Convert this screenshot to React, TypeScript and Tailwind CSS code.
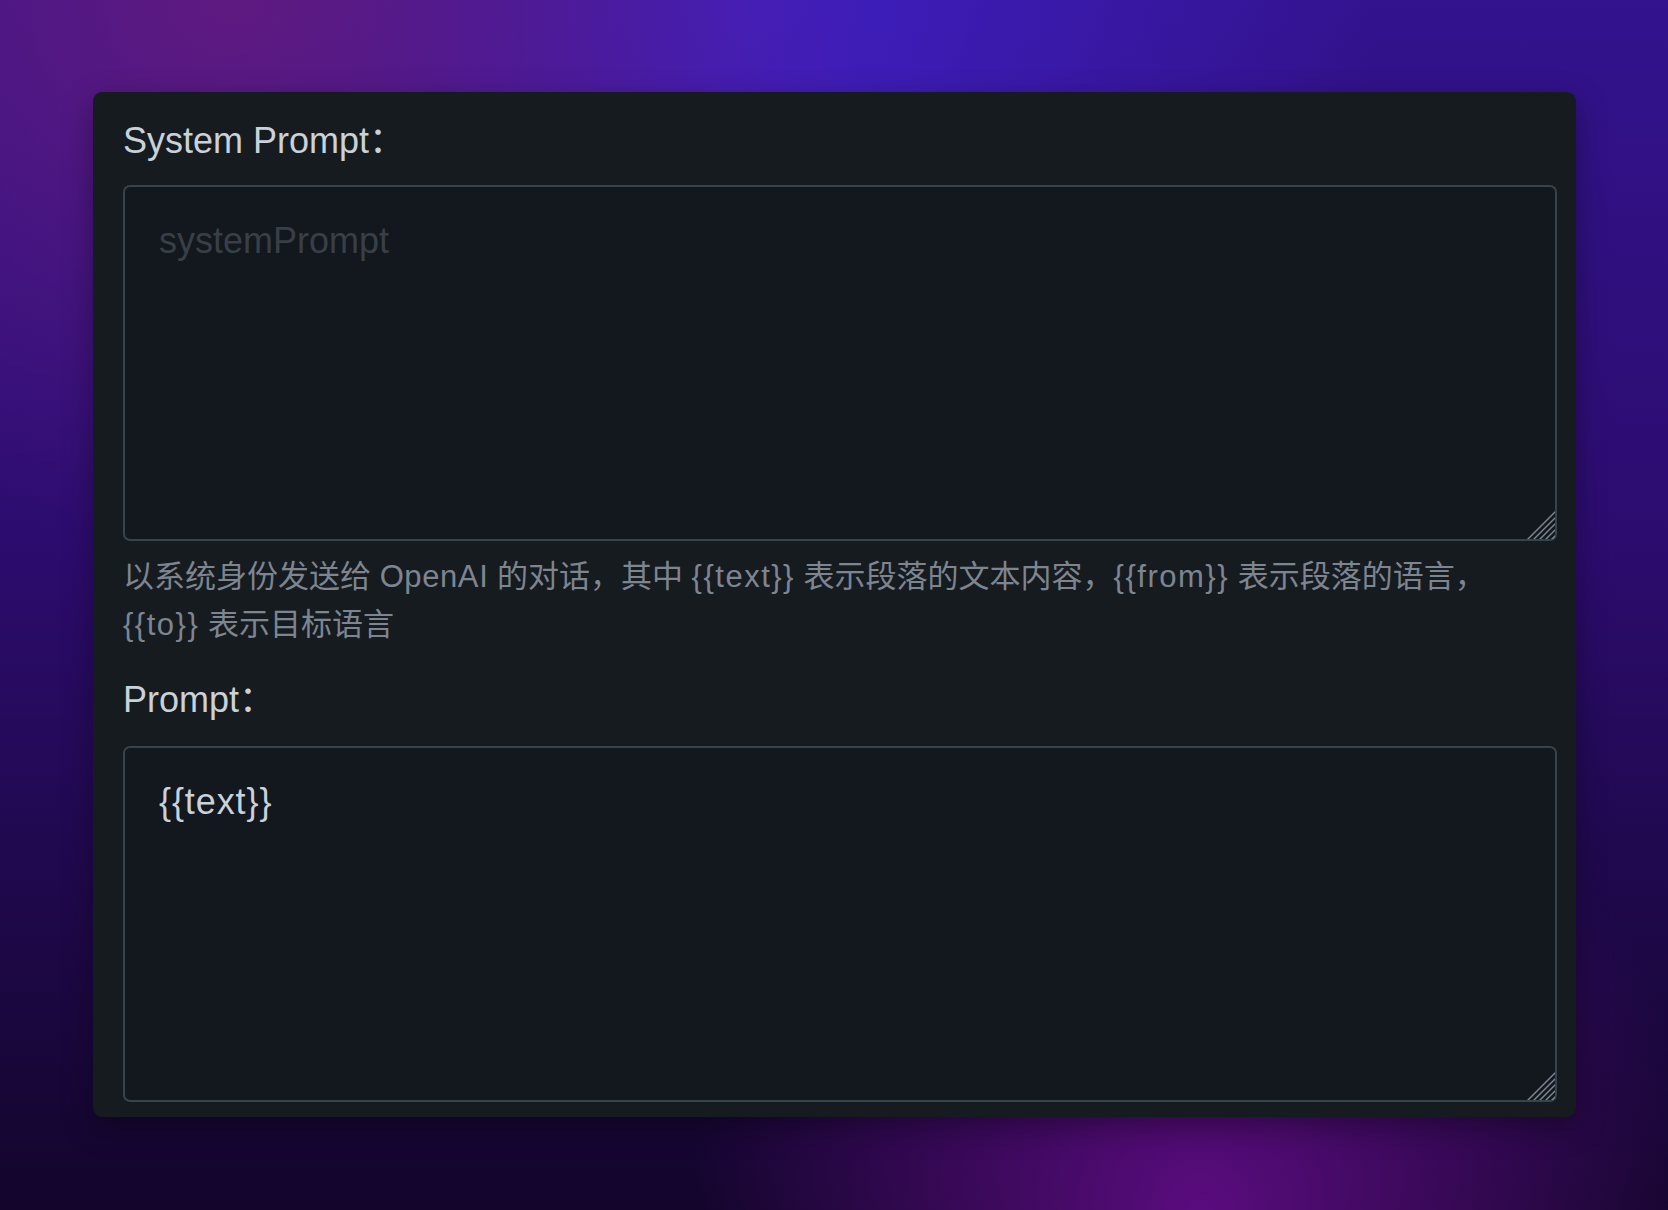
import React from 'react';

const Grip = () => (
  <svg
    className="pointer-events-none absolute bottom-[2px] right-[2px]"
    width="28"
    height="28"
    viewBox="0 0 28 28"
    fill="none"
  >
    <g stroke="#7d8590" strokeWidth="1.5" strokeLinecap="round">
      <line x1="1" y1="28" x2="28" y2="1" />
      <line x1="7" y1="28" x2="28" y2="7" />
      <line x1="13" y1="28" x2="28" y2="13" />
      <line x1="19" y1="28" x2="28" y2="19" />
      <line x1="25" y1="28" x2="28" y2="25" />
    </g>
  </svg>
);

const PromptBox = ({ placeholder, value, className = '' }: { placeholder?: string; value?: string; className?: string }) => (
  <div className="relative">
    <textarea
      placeholder={placeholder}
      defaultValue={value}
      className={`block h-[356px] w-full resize-none rounded-[7px] border-2 border-[#36444d] bg-[#13171e] px-[34px] pt-[27px] text-[36px] leading-[54px] text-[#c9d1d9] outline-none placeholder:text-[#393f47] ${className}`}
    />
    <Grip />
  </div>
);

// braces are wider in the original font
const Var = ({ name }: { name: string }) => <span className="tracking-[1.5px]">{`{{${name}}}`}</span>;

export default function App() {
  return (
    <div className="min-h-[1210px] w-full bg-[radial-gradient(ellipse_at_14%_0%,#5f1a80_0%,transparent_32%),radial-gradient(ellipse_at_45%_0%,#3f1fc2_0%,transparent_48%),radial-gradient(ellipse_at_72%_100%,#5a0c7e_0%,transparent_30%),linear-gradient(180deg,#33138e_0%,#2c0c6e_45%,#13052b_100%)] pl-[93px] pr-[92px] pt-[92px] pb-[93px] font-['Liberation_Sans','Noto_Sans_CJK_SC',sans-serif]">
      <div className="flex flex-col rounded-[9px] bg-[#161b20] pb-[15px] pl-[30px] pr-[19px] pt-[22px] shadow-[0_10px_30px_rgba(0,0,0,0.35)]">
        <label className="mb-[17px] block text-[36px] leading-[54px] text-[#c9d1d9]">System Prompt：</label>
        <PromptBox placeholder="systemPrompt" />
        <p className="mt-[12px] text-[31px] leading-[48px] text-[#7d8590]">
          以系统身份发送给 <span className="tracking-[0.6px]">OpenAI</span> 的对话，其中 <Var name="text" /> 表示段落的文本内容，<Var name="from" /> 表示段落的语言，<Var name="to" /> 表示目标语言
        </p>
        <label className="mb-[19px] mt-[24px] block text-[36px] leading-[54px] text-[#c9d1d9]">Prompt：</label>
        <PromptBox value="{{text}}" className="tracking-[0.9px]" />
      </div>
    </div>
  );
}
